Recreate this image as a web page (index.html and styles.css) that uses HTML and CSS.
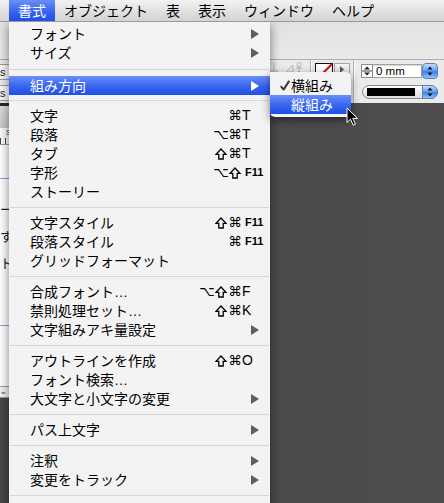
FILE: index.html
```html
<!DOCTYPE html>
<html lang="ja">
<head>
<meta charset="utf-8">
<link rel="stylesheet" href="styles.css">
</head>
<body>
<div class="app">
  <div class="menubar">
    <span class="mb-item active">書式</span>
    <span class="mb-item">オブジェクト</span>
    <span class="mb-item">表</span>
    <span class="mb-item">表示</span>
    <span class="mb-item">ウィンドウ</span>
    <span class="mb-item">ヘルプ</span>
  </div>
  <div class="toolbar"></div>
  <div class="controlbar">
    <div class="cb-left">
      <div class="fld">s</div>
      <div class="fld">s</div>
    </div>
    <div class="cb-right">
      <svg class="faint" width="40" height="14" viewBox="0 0 40 14">
        <path d="M6 2V10M2 10H10" stroke="#b4b4b4" stroke-width="1" fill="none"/>
        <path d="M18 11L25 4V11Z" stroke="#b4b4b4" stroke-width="1" fill="none"/>
        <circle cx="31" cy="3.5" r="2" stroke="#b4b4b4" fill="none"/>
        <path d="M28 7H34M31 6V10M29 12L31 10L33 12" stroke="#b4b4b4" fill="none"/>
      </svg>
      <div class="vsep"></div>
      <div class="swatch">
        <svg width="16" height="16" viewBox="0 0 16 16"><path d="M0 16L16 0" stroke="#d0101c" stroke-width="2"/></svg>
      </div>
      <div class="swbtn">
        <svg width="6" height="7" viewBox="0 0 6 7"><path d="M1 0L5 3.5L1 7Z" fill="#555"/></svg>
      </div>
      <div class="vsep wide"></div>
      <div class="stroke-ctrls">
        <div class="weight-row">
          <div class="spin">
            <svg width="10" height="12" viewBox="0 0 10 12"><path d="M2 4.5L5 1.5L8 4.5Z" fill="#222"/><path d="M0 6H10" stroke="#444"/><path d="M2 7.5L8 7.5L5 10.5Z" fill="#222"/></svg>
          </div>
          <div class="field">0 mm</div>
          <div class="stepper">
            <svg width="6" height="12" viewBox="0 0 6 12"><path d="M0.5 4.5L3 1.5L5.5 4.5Z" fill="#111"/><path d="M0.5 7.5L5.5 7.5L3 10.5Z" fill="#111"/></svg>
          </div>
        </div>
        <div class="dropdown">
          <div class="line-sample"></div>
          <div class="stepper pill">
            <svg width="6" height="12" viewBox="0 0 6 12"><path d="M0.5 4.5L3 1.5L5.5 4.5Z" fill="#111"/><path d="M0.5 7.5L5.5 7.5L3 10.5Z" fill="#111"/></svg>
          </div>
        </div>
      </div>
    </div>
  </div>
  <div class="workspace">
    <div class="doc">
      <div class="doc-top"></div>
      <div class="ruler"><span class="rnum">S</span></div>
      <div class="doc-body">
        <div class="bline first"></div>
        <div class="frags">
          <div>ー</div>
          <div>す</div>
          <div>ト</div>
        </div>
        <div class="bline second"></div>
        <div class="ddw">⌄</div>
      </div>
    </div>
  </div>
</div>

<div class="menu">
  <div class="item"><span class="label">フォント</span><span class="arrow"><svg width="8" height="10" viewBox="0 0 8 10"><path d="M0 0L8 5L0 10Z"/></svg></span></div>
  <div class="item"><span class="label">サイズ</span><span class="arrow"><svg width="8" height="10" viewBox="0 0 8 10"><path d="M0 0L8 5L0 10Z"/></svg></span></div>
  <div class="sep s1"></div>
  <div class="item hl"><span class="label">組み方向</span><span class="arrow"><svg width="8" height="10" viewBox="0 0 8 10"><path d="M0 0L8 5L0 10Z"/></svg></span></div>
  <div class="sep s2"></div>
  <div class="item"><span class="label">文字</span><span class="mods"><span class="m">⌘</span></span><span class="key">T</span></div>
  <div class="item"><span class="label">段落</span><span class="mods"><span class="m">⌥</span><span class="m">⌘</span></span><span class="key">T</span></div>
  <div class="item"><span class="label">タブ</span><span class="mods"><span class="m"><svg class="shift" width="12" height="12" viewBox="0 0 12 12"><path d="M6 1L11 6.3H8.2V11H3.8V6.3H1Z"/></svg></span><span class="m">⌘</span></span><span class="key">T</span></div>
  <div class="item"><span class="label">字形</span><span class="mods"><span class="m">⌥</span><span class="m"><svg class="shift" width="12" height="12" viewBox="0 0 12 12"><path d="M6 1L11 6.3H8.2V11H3.8V6.3H1Z"/></svg></span></span><span class="key f">F11</span></div>
  <div class="item"><span class="label">ストーリー</span></div>
  <div class="sep"></div>
  <div class="item"><span class="label">文字スタイル</span><span class="mods"><span class="m"><svg class="shift" width="12" height="12" viewBox="0 0 12 12"><path d="M6 1L11 6.3H8.2V11H3.8V6.3H1Z"/></svg></span><span class="m">⌘</span></span><span class="key f">F11</span></div>
  <div class="item"><span class="label">段落スタイル</span><span class="mods"><span class="m">⌘</span></span><span class="key f">F11</span></div>
  <div class="item"><span class="label">グリッドフォーマット</span></div>
  <div class="sep"></div>
  <div class="item"><span class="label">合成フォント<span class="ell">…</span></span><span class="mods"><span class="m">⌥</span><span class="m"><svg class="shift" width="12" height="12" viewBox="0 0 12 12"><path d="M6 1L11 6.3H8.2V11H3.8V6.3H1Z"/></svg></span><span class="m">⌘</span></span><span class="key">F</span></div>
  <div class="item"><span class="label">禁則処理セット<span class="ell">…</span></span><span class="mods"><span class="m"><svg class="shift" width="12" height="12" viewBox="0 0 12 12"><path d="M6 1L11 6.3H8.2V11H3.8V6.3H1Z"/></svg></span><span class="m">⌘</span></span><span class="key">K</span></div>
  <div class="item"><span class="label">文字組みアキ量設定</span><span class="arrow"><svg width="8" height="10" viewBox="0 0 8 10"><path d="M0 0L8 5L0 10Z"/></svg></span></div>
  <div class="sep"></div>
  <div class="item"><span class="label">アウトラインを作成</span><span class="mods"><span class="m"><svg class="shift" width="12" height="12" viewBox="0 0 12 12"><path d="M6 1L11 6.3H8.2V11H3.8V6.3H1Z"/></svg></span><span class="m">⌘</span></span><span class="key">O</span></div>
  <div class="item"><span class="label">フォント検索<span class="ell">…</span></span></div>
  <div class="item"><span class="label">大文字と小文字の変更</span><span class="arrow"><svg width="8" height="10" viewBox="0 0 8 10"><path d="M0 0L8 5L0 10Z"/></svg></span></div>
  <div class="sep"></div>
  <div class="item"><span class="label">パス上文字</span><span class="arrow"><svg width="8" height="10" viewBox="0 0 8 10"><path d="M0 0L8 5L0 10Z"/></svg></span></div>
  <div class="sep"></div>
  <div class="item"><span class="label">注釈</span><span class="arrow"><svg width="8" height="10" viewBox="0 0 8 10"><path d="M0 0L8 5L0 10Z"/></svg></span></div>
  <div class="item"><span class="label">変更をトラック</span><span class="arrow"><svg width="8" height="10" viewBox="0 0 8 10"><path d="M0 0L8 5L0 10Z"/></svg></span></div>
  <div class="sep"></div>
  <div class="item"><span class="label"></span></div>
</div>

<div class="submenu">
  <div class="sitem"><span class="check"><svg width="10" height="11" viewBox="0 0 10 11"><path d="M0.8 6.2L3.6 9.6L9.2 0.8" stroke="#3a3a3a" stroke-width="2" fill="none" stroke-linejoin="round"/></svg></span><span>横組み</span></div>
  <div class="sitem hl"><span class="check"></span><span>縦組み</span></div>
</div>

<svg class="cursor" width="13" height="20" viewBox="0 0 13 20">
  <path d="M1 1V15.5L4.5 12.2L7.2 18.2L9.4 17.2L6.8 11.4H11.5Z" fill="#000" stroke="#fff" stroke-width="1" stroke-linejoin="round"/>
</svg>
</body>
</html>
```

FILE: styles.css
```css
* { box-sizing: border-box; }

body {
  margin: 0;
  width: 444px;
  height: 503px;
  overflow: hidden;
  position: relative;
  background: #4a4a4a;
  font-family: "Noto Sans CJK JP", "Noto Sans", sans-serif;
}

.app {
  display: flex;
  flex-direction: column;
  height: 503px;
}

/* ---------- menubar ---------- */
.menubar {
  height: 22px;
  border-bottom: 1px solid #9a9a9a;
  background: linear-gradient(#f2f2f2, #d3d3d3);
  display: flex;
  padding-left: 9px;
  font-size: 14px;
  line-height: 21px;
  color: #000;
  position: relative;
  z-index: 3;
}

.mb-item {
  padding: 0 9px;
  white-space: nowrap;
}

.mb-item.active {
  background: linear-gradient(#6a8ff7, #3864ee 55%, #1f4fe6);
  color: #fff;
}

/* ---------- app toolbar ---------- */
.toolbar {
  height: 38px;
  border-bottom: 1px solid #acacac;
  background: linear-gradient(#e2e2e2, #eaeaea);
}

.controlbar {
  height: 43px;
  background: #ebebeb;
  display: flex;
  justify-content: space-between;
}

.cb-left {
  display: flex;
  flex-direction: column;
  gap: 5px;
  padding-top: 4px;
}

.fld {
  margin-left: -3px;
  width: 60px;
  height: 16px;
  border: 1px solid #9c9c9c;
  background: #f7f7f7;
  font-family: "Liberation Sans", sans-serif;
  font-size: 11px;
  line-height: 14px;
  padding-left: 2px;
  color: #222;
}

.cb-right {
  display: flex;
  align-items: flex-start;
  padding-right: 6px;
}

.faint {
  margin-top: 1px;
  margin-right: 2px;
}

.vsep {
  align-self: stretch;
  width: 2px;
  border-left: 1px solid #b4b4b4;
  border-right: 1px solid #fafafa;
  margin-right: 3px;
}

.vsep.wide {
  margin-left: 3px;
  margin-right: 6px;
}

.swatch {
  margin-top: 3px;
  width: 18px;
  height: 18px;
  border: 1px solid #111;
  background: #fff;
  margin-right: 1px;
}

.swatch svg { display: block; }

.swbtn {
  margin-top: 3px;
  width: 16px;
  height: 16px;
  border: 1px solid #a5a5a5;
  background: linear-gradient(#f4f4f4, #d6d6d6);
  display: flex;
  justify-content: center;
  padding-top: 2px;
}

.stroke-ctrls {
  margin-top: 3px;
  width: 77px;
  display: flex;
  flex-direction: column;
  gap: 6px;
}

.weight-row {
  display: flex;
  align-items: center;
  height: 16px;
}

.spin {
  width: 12px;
  height: 14px;
  border: 1px solid #8c8c8c;
  background: #fdfdfd;
  display: flex;
  align-items: center;
  justify-content: center;
}

.field {
  width: 49px;
  height: 14px;
  border: 1px solid #a2a2a2;
  border-left: none;
  background: #fff;
  box-shadow: inset 0 1px 1px rgba(0,0,0,0.15);
  font-family: "Liberation Sans", sans-serif;
  font-size: 11.5px;
  line-height: 12px;
  padding-left: 3px;
  color: #000;
}

.stepper {
  width: 16px;
  height: 16px;
  border: 1px solid #5c7fb8;
  border-radius: 4px;
  background: linear-gradient(#c4dcfb, #6aa3f3 45%, #3b80ec 55%, #93c3fb);
  display: flex;
  align-items: center;
  justify-content: center;
}

.dropdown {
  width: 76px;
  height: 14px;
  border: 1px solid #8a8a8a;
  border-radius: 7px;
  background: linear-gradient(#ffffff, #dcdcdc);
  display: flex;
  align-items: center;
  justify-content: space-between;
  margin-left: 1px;
}

.line-sample {
  margin-left: 4px;
  width: 48px;
  height: 8px;
  background: #000;
}

.stepper.pill {
  width: 16px;
  height: 14px;
  margin-right: -1px;
  border-radius: 0 7px 7px 0;
}

/* ---------- workspace ---------- */
.workspace {
  flex: 1;
  background: linear-gradient(90deg, #474747, #4d4d4d);
  display: flex;
  align-items: flex-start;
}

.doc {
  width: 220px;
  height: 295px;
  background: #fff;
  display: flex;
  flex-direction: column;
}

.doc-top {
  height: 25px;
  border-top: 3px solid #2b2b2b;
  background: linear-gradient(#dcdcdc, #c8c8c8);
}

.ruler {
  height: 17px;
  border-bottom: 1px solid #9a9a9a;
  background:
    repeating-linear-gradient(90deg, #444 0 1px, transparent 1px 5px) left bottom / 100% 6px no-repeat,
    #fafafa;
  font-family: "Liberation Sans", sans-serif;
  font-size: 8px;
  line-height: 9px;
  padding-left: 6px;
  color: #333;
}

.doc-body {
  flex: 1;
  display: flex;
  flex-direction: column;
}

.bline {
  height: 1px;
  background: #7ea2ee;
}

.bline.first { margin-top: 33px; }
.bline.second { margin-top: 49px; }

.frags {
  margin-top: 16px;
  font-size: 13px;
  line-height: 27px;
  color: #222;
}

.ddw {
  margin-top: 60px;
  width: 40px;
  height: 12px;
  border: 1px solid #999;
  margin-left: -30px;
  background: #f0f0f0;
  font-family: "DejaVu Sans", sans-serif;
  font-size: 9px;
  line-height: 8px;
  text-align: right;
  padding-right: 2px;
  color: #333;
}

/* ---------- dropdown menu ---------- */
.menu {
  position: absolute;
  left: 9px;
  top: 22px;
  width: 261px;
  padding-top: 2px;
  padding-bottom: 4px;
  background: #f3f3f3;
  box-shadow: 0 3px 10px rgba(0,0,0,0.5);
  font-size: 14px;
  color: #000;
  z-index: 2;
}

.item {
  height: 19px;
  display: flex;
  align-items: center;
  padding: 0 6px 0 21px;
}

.item.hl {
  background: linear-gradient(#6a8ff7, #3864ee 55%, #1f4fe6);
  color: #fff;
}

.label {
  flex: 1;
  white-space: nowrap;
  line-height: 19px;
}

.ell {
  font-family: "Liberation Sans", sans-serif;
}

.mods {
  display: flex;
  align-items: center;
}

.m {
  width: 14px;
  height: 19px;
  display: flex;
  align-items: center;
  justify-content: center;
  font-family: "DejaVu Sans", sans-serif;
  font-size: 13.5px;
  line-height: 19px;
}

.shift {
  display: block;
  fill: none;
  stroke: #000;
  stroke-width: 1.3;
  stroke-linejoin: miter;
}

.key {
  width: 22px;
  font-family: "Liberation Sans", sans-serif;
  font-size: 14px;
  line-height: 19px;
}

.key.f {
  font-size: 11px;
  font-weight: bold;
  padding-left: 3px;
}

.arrow {
  width: 22px;
  padding-left: 9px;
  display: flex;
  align-items: center;
}

.arrow svg { fill: #5e5e5e; display: block; }
.item.hl .arrow svg { fill: #fff; }

.sep {
  height: 1px;
  background: #d7d7d7;
  margin: 6px 1px 5px;
}

.sep.s1 { margin: 7px 1px 6px; }
.sep.s2 { margin: 5px 1px 5px; }

/* ---------- submenu ---------- */
.submenu {
  position: absolute;
  left: 270px;
  top: 72px;
  width: 81px;
  padding: 4px 0 3px;
  background: #f3f3f3;
  border-radius: 0 5px 5px 5px;
  box-shadow: 0 3px 9px rgba(0,0,0,0.5);
  font-size: 14px;
  color: #000;
  z-index: 4;
}

.sitem {
  height: 19px;
  display: flex;
  align-items: center;
  padding-left: 10px;
  line-height: 19px;
}

.sitem.hl {
  background: linear-gradient(#6a8ff7, #3864ee 55%, #1f4fe6);
  color: #fff;
}

.check {
  width: 11px;
  display: flex;
  align-items: center;
}

.check svg { display: block; }

.cursor {
  position: absolute;
  left: 346px;
  top: 107px;
  z-index: 5;
}
```
